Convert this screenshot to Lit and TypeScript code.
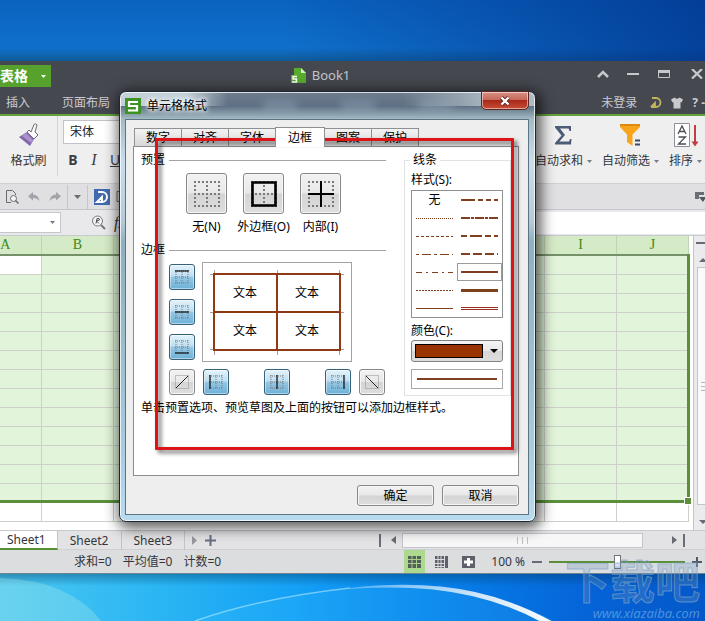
import { LitElement, html, svg, css } from "lit";
import { customElement, state } from "lit/decorators.js";
import { classMap } from "lit/directives/class-map.js";

const COLUMNS = ["A", "B", "C", "D", "E", "F", "G", "H", "I", "J"];
const ROWS = Array.from({ length: 14 }, (_, i) => i + 1);
const TABS = ["数字", "对齐", "字体", "边框", "图案", "保护"];

const BROWN = "#7f4020";

type LineStyle = { name: string; width: number; dash?: string; double?: boolean };

const LINE_STYLES: LineStyle[] = [
  { name: "无", width: 0 },
  { name: "粗双点划线", width: 2, dash: "14 3 5 3 5 3" },
  { name: "点线", width: 1, dash: "1 1" },
  { name: "斜点划线", width: 2, dash: "9 1 3 1" },
  { name: "虚线", width: 1, dash: "3 2" },
  { name: "粗点划线", width: 2, dash: "6 3 12 3" },
  { name: "点划线", width: 1, dash: "3 3 9 3" },
  { name: "粗虚线", width: 2, dash: "9 3" },
  { name: "双点划线", width: 1, dash: "6 4 2 4" },
  { name: "中实线", width: 2 },
  { name: "细虚线", width: 1, dash: "2 1" },
  { name: "粗实线", width: 3 },
  { name: "细实线", width: 1 },
  { name: "双线", width: 1, double: true },
];

// Dotted 2x2 cell glyph used by both the preset and the edge buttons.
const dottedCell = (size: number, step: number, extra: unknown) => {
  const m = size / 2;
  const e = size - 1;
  return html`<svg width=${size} height=${size} viewBox="0 0 ${size} ${size}" aria-hidden="true">
    <path
      d="M0 1H${size}M0 ${m}H${size}M0 ${e}H${size}M1 0V${size}M${m} 0V${size}M${e} 0V${size}"
      fill="none"
      stroke="#77797c"
      stroke-width=${step > 2 ? 2 : 1}
      stroke-dasharray=${step > 2 ? "2 2" : "1 1"}
    />
    ${extra}
  </svg>`;
};

const edge = (d: string) => svg`<path d=${d} stroke="#111" stroke-width="1.2" fill="none" />`;

@customElement("app-root")
export class AppRoot extends LitElement {
  @state() private tab = "边框";
  @state() private line = "中实线";

  static styles = css`
    :host {
      display: block;
      font-family: "Noto Sans", "Noto Sans CJK SC", sans-serif;
      font-size: 12px;
      line-height: 16px;
      color: #33363c;
    }
    * { box-sizing: border-box; }
    button, input, select { font: inherit; color: inherit; margin: 0; }
    button { padding: 0; border: 0; background: none; display: inline-flex; align-items: center; justify-content: center; white-space: nowrap; }
    svg { display: block; flex: none; }
    .desktop {
      position: relative;
      display: flex;
      flex-direction: column;
      min-height: 100vh;
      padding-top: 61px;
      overflow: hidden;
      background:
        linear-gradient(90deg, rgba(0,50,140,0) 40%, rgba(0,50,140,.75) 100%) top / 100% 61px no-repeat,
        linear-gradient(180deg, #0a63bf 0, #0f70cb 48px, #105a96 61px, transparent 61px),
        linear-gradient(90deg, #4cc8f2 0, #2bb6f3 22%, #14a0f6 42%, #0680ea 62%, #0562d6 85%, #0458c8 100%);
    }
    .aurora { flex: 1; width: 100%; height: 48px; min-height: 48px; }

    .titlebar { display: flex; align-items: flex-start; height: 30px; background: #464850; color: #c3c5cc; position: relative; }
    .brand { display: flex; align-items: center; gap: 13px; height: 22px; margin-top: 4px; padding: 0 5px 0 0; background: #56a22c; color: #fff; font-size: 14px; font-weight: 700; }
    .book { flex: 1; display: flex; justify-content: center; align-items: center; gap: 6px; height: 28px; padding-right: 6px; font-size: 13px; }
    .wm { display: flex; align-items: center; gap: 16px; height: 26px; margin-right: 0; }
    .menubar { display: flex; align-items: center; height: 25px; padding-left: 6px; gap: 32px; background: #464850; border-bottom: 2px solid #62a33c; color: #c9cbd0; overflow: hidden; }
    .menubar button { font-size: 12px; }
    .account { margin-left: auto; display: flex; align-items: center; gap: 9px; }

    .ribbon { display: flex; height: 68px; background: #efefef; border-bottom: 1px solid #cfd0d3; overflow: hidden; }
    .tool { display: flex; flex-direction: column; align-items: center; justify-content: flex-start; gap: 6px; padding-top: 7px; }
    .tool .cap { display: flex; align-items: center; gap: 4px; }
    .brush { width: 58px; border-right: 1px solid #d4d4d6; height: 60px; }
    .fonts { padding: 4px 0 0 5px; display: flex; flex-direction: column; gap: 8px; width: 160px; }
    .fontname { height: 24px; border: 1px solid #c2c3c8; border-radius: 0; background: #fff; appearance: none; padding: 0 6px; color: #222; }
    .biu { display: flex; gap: 11px; padding-left: 5px; font-size: 14px; align-items: center; }
    .biu button { width: 10px; color: #3c3e44; }
    .bold { font-weight: 700; }
    .ital { font-family: "Liberation Serif", serif; font-style: italic; font-size: 16px; }
    .under { text-decoration: underline; }
    .data { margin-left: auto; display: flex; gap: 10px; padding-right: 3px; }

    .quick { display: flex; align-items: center; height: 26px; background: #e0e0e2; border-bottom: 1px solid #c4c6cc; gap: 6px; padding-left: 5px; }
    .history { display: flex; align-items: center; gap: 9px; }
    .quick .sep { width: 1px; height: 24px; background: #c5c6ca; }
    .quick .end { margin-left: auto; }
    .quick .blue { background: #4169b0; width: 16px; height: 16px; }
    .formula { display: flex; align-items: center; height: 26px; background: #e9e9ec; border-bottom: 1px solid #c9cacf; }
    .namebox { display: flex; align-items: center; width: 61px; height: 21px; margin-right: 30px; border: 1px solid #c6c7cc; border-left: 0; background: #fff; }
    .namebox input { width: 50px; border: 0; background: none; outline: 0; }
    .formula .ital { padding: 0 8px; }
    .fx { flex: 1; height: 22px; border: 0; background: #fff; border-radius: 0; outline: 0; }

    .sheetarea { display: flex; background: #fff; overflow: hidden; height: 294px; }
    .cells { flex: 1; position: relative; overflow: hidden; }
    table { border-collapse: collapse; table-layout: fixed; width: 720px; margin-left: -31px; }
    th { height: 19px; padding: 0; font: 14px/16px "Liberation Serif", serif; color: #3c8820; background: #d5eac6; border-right: 1px solid #bfd4b5; border-bottom: 2px solid #75916a; }
    td { height: 19px; padding: 0; border: 1px solid #cdd1ca; border-top: 0; background: #e2f4d9; }
    td.plain { background: #fff; }
    .range { position: absolute; left: -31px; top: 18px; width: 721px; height: 249px; border: solid #5b8f3c; border-width: 0 3px 3px 0; pointer-events: none; }
    .handle { position: absolute; right: -4px; bottom: -4px; width: 6px; height: 6px; background: #5b8f3c; outline: 1px solid #fff; }
    .vscroll { width: 12px; background: #ebebed; border-left: 1px solid #c3c4c8; display: flex; flex-direction: column; align-items: flex-end; padding: 6px 0; gap: 7px; }
    .vthumb { flex: 1; width: 8px; margin-top: -4px; background: #fafafa; border: 1px solid #c4c5ca; border-right: 0; display: flex; align-items: center; }
    .vscroll .down { margin-top: 8px; }

    .tabsbar { display: flex; height: 20px; background: #e3e3e5; border-top: 1px solid #c8c9cc; border-bottom: 1px solid #cfd0d3; }
    .tabsbar .sheet { padding: 0 12px; border-right: 1px solid #c2c3c8; height: 19px; }
    .tabsbar .sheet.on { background: #fff; border-bottom: 2px solid #549030; padding: 0 11px 0 7px; }
    .addsheet { display: flex; align-items: center; gap: 8px; padding-left: 7px; }
    .hscroll { margin-left: auto; display: flex; align-items: center; gap: 6px; padding-right: 20px; }
    .hbar { width: 241px; height: 15px; border: 1px solid #c4c5ca; background: #f7f7f8; display: flex; align-items: center; justify-content: center; }
    .hscroll .right { margin-left: 23px; }
    .mark { width: 2px; height: 13px; background: #6a6c78; }

    .status { display: flex; align-items: center; height: 24px; background: #dcdddf; border-bottom: 1px solid #6d8590; padding-left: 74px; gap: 11px; }
    .views { margin-left: auto; display: flex; align-items: center; gap: 6px; padding-right: 1px; }
    .views button { width: 21px; height: 23px; }
    .views .on { background: #add98f; }
    .zoom { display: flex; align-items: center; gap: 7px; padding-right: 3px; }
    .zoom span { font-size: 12px; }
    .slider { appearance: none; width: 136px; height: 16px; background: linear-gradient(#5b8f3c, #5b8f3c) center / 100% 2px no-repeat; }
    .slider::-webkit-slider-thumb { appearance: none; width: 7px; height: 14px; background: #fff; border: 1px solid #6f7278; border-radius: 0; }

    .dialog {
      position: absolute;
      left: 119px;
      top: 91px;
      width: 417px;
      padding: 0 6px 6px 5px;
      border: 1px solid #1d2833;
      border-radius: 7px;
      background:
        linear-gradient(90deg, #c3d0d8 0, #c3d0d8 16%, rgba(195,208,216,0) 26%, rgba(195,208,216,0) 68%, #aebbc4 90%) top / 100% 14px no-repeat,
        linear-gradient(180deg, #6f7d8d 0, #5e7084 14px, #a3bcc4 27px, #c9deed 70px, #b4cad9 130px, #8eb0c0 150px, #a5cbdc 350px, #b9dbf0 100%);
      box-shadow: inset 0 0 0 1px rgba(255,255,255,.75), 2px 3px 14px 3px rgba(0,0,0,.65);
      color: #000;
    }
    .dtitle { display: flex; align-items: center; gap: 6px; height: 27px; }
    .dtitle .name { text-shadow: 0 0 7px #fff, 0 0 5px #fff, 0 0 4px #fff; }
    .blurred { flex: 1; display: flex; gap: 44px; padding-left: 50px; filter: blur(4px); }
    .blurred i { height: 10px; width: 34px; background: #95a7bb; opacity: .5; }
    .close { align-self: flex-start; width: 48px; height: 19px; margin: -1px 0 0; border: 1px solid #5c2824; border-radius: 0 0 5px 5px; background: linear-gradient(#d98f83 0, #c66a5b 45%, #a8291a 50%, #c94c37 100%); box-shadow: inset 0 0 0 1px rgba(255,255,255,.5); }
    .client { background: #eee; border: 1px solid #5f7482; padding: 6px 9px 8px 7px; }
    .dtabs { display: flex; align-items: flex-end; height: 20px; padding-left: 1px; }
    .dtabs button { width: 48px; height: 18px; margin-right: -1px; flex: 0 1 auto; border: 1px solid #8e9093; border-bottom: 0; background: linear-gradient(#f3f3f3, #d8d8d8); }
    .dtabs button.on { width: 50px; height: 20px; background: #fff; margin-bottom: -1px; z-index: 1; }
    .panel { display: flex; justify-content: space-between; gap: 18px; background: #fff; border: 1px solid #8a8c90; padding: 5px 7px 0 7px; }
    .left { flex: 1; min-width: 0; }
    .head { display: flex; align-items: center; gap: 4px; height: 16px; }
    .head::after { content: ""; flex: 1; height: 1px; background: #a3a3a5; }
    .presets { display: grid; grid-template-columns: 57px 57px 57px; padding: 5px 0 7px 37px; }
    .presets label { display: flex; flex-direction: column; align-items: center; gap: 5px; white-space: nowrap; }
    .face { border: 1px solid #85878a; border-radius: 3px; background: linear-gradient(#f2f2f2 0, #e8e8e8 48%, #d4d4d4 52%, #dedede 100%); box-shadow: inset 0 0 0 1px #f6f6f6; }
    .presets .face { width: 41px; height: 41px; }
    .editor { display: grid; grid-template-columns: 26px 150px; column-gap: 7px; row-gap: 7px; padding: 4px 0 0 28px; }
    .side { display: flex; flex-direction: column; gap: 9px; padding-top: 2px; }
    .sq { width: 26px; height: 26px; }
    .blueface { border-color: #376079; background: linear-gradient(#e4f3fb 0, #bfdff1 45%, #94c6e3 52%, #6eb1d8 100%); box-shadow: inset 0 0 0 1px rgba(255,255,255,.45); }
    .preview { border: 1px solid #a3a3a5; height: 100px; position: relative; display: grid; grid-template: 38px 38px / 62px 62px; padding: 11px; place-items: center; }
    .preview svg { position: absolute; left: 0; top: 0; }
    .bottom { grid-column: 1 / -1; display: flex; gap: 8px; width: 216px; }
    .bottom .mid { flex: 1; display: flex; justify-content: space-between; }
    .hint { margin: 5px 0 59px; white-space: nowrap; width: 245px; }
    fieldset { margin: 0; width: 107px; align-self: flex-start; min-width: 0; padding: 4px 6px 6px; border: 1px solid #e2e2e4; }
    legend { padding: 0 3px; margin-left: -1px; }
    .lines { display: grid; grid-template-columns: 1fr 1fr; grid-auto-rows: 18px; border: 1px solid #8d8f93; margin: 2px 0 5px; width: 92px; }
    .lines button { border: 1px solid transparent; }
    .lines button.on { border-color: #9a9ca0; }
    .cap2 { display: block; }
    .combo { position: relative; width: 92px; height: 22px; margin: 1px 0 7px; }
    .combo select { appearance: none; width: 100%; height: 22px; border: 1px solid #7f8285; border-radius: 3px; background: linear-gradient(#f4f4f4 0, #e9e9e9 50%, #d6d6d6 52%, #dedede 100%); }
    .swatch { position: absolute; left: 4px; top: 4px; right: 20px; bottom: 4px; background: #993300; border: 1px solid #000; pointer-events: none; }
    .combo svg { position: absolute; right: 5px; top: 9px; pointer-events: none; }
    .sample { width: 92px; height: 20px; border: 1px solid #a6a8ab; display: flex; align-items: center; justify-content: center; }
    .actions { display: flex; justify-content: flex-end; gap: 8px; padding-top: 9px; }
    .actions button { width: 77px; height: 21px; }

    .callout { position: absolute; left: 155px; top: 138px; width: 359px; height: 312px; border: 3px solid #dc1418; border-radius: 1px; pointer-events: none; filter: drop-shadow(3px 3px 2px rgba(0,0,0,.6)); }
    .watermark { position: absolute; right: 5px; bottom: 2px; text-align: right; pointer-events: none; color: rgba(110,150,190,.3); }
    .watermark b { display: block; font-size: 45px; line-height: 48px; font-weight: 700; -webkit-text-stroke: 1px rgba(130,165,200,.65); }
    .watermark i { display: block; font-size: 13px; line-height: 14px; color: rgba(100,165,225,.75); }
  `;

  private lineGlyph(s: LineStyle) {
    if (!s.width) return html`无`;
    const y = s.width % 2 ? 3.5 : 3;
    return html`<svg width="37" height="7" viewBox="0 0 37 7" aria-hidden="true">
      ${s.double
        ? svg`<path d="M0 2.5H37M0 4.5H37" stroke="#993020" />`
        : svg`<path d="M0 ${y}H37" stroke=${BROWN} stroke-width=${s.width} stroke-dasharray=${s.dash ?? "none"} />`}
    </svg>`;
  }

  private caret(color = "#777a80") {
    return html`<svg width="5" height="3" viewBox="0 0 5 3" aria-hidden="true"><path d="M0 0H5L2.5 3Z" fill=${color} /></svg>`;
  }

  private edgeButton(name: string, d: string, blue = true) {
    return html`<button class=${classMap({ face: true, sq: true, blueface: blue })} aria-label=${name}>
      ${blue
        ? dottedCell(14, 1, edge(d))
        : html`<svg width="14" height="14" viewBox="0 0 14 14" aria-hidden="true"><path d="M.5 .5H13.5V13.5H.5Z" fill="none" stroke="#8c8e90" stroke-dasharray="1 1" /><path d=${d} stroke="#222" /></svg>`}
    </button>`;
  }

  private renderTop() {
    return html`
      <header class="titlebar">
        <button class="brand">表格 ${this.caret("#fff")}</button>
        <div class="book">
          <svg width="15" height="15" viewBox="0 0 15 15" aria-hidden="true"><path d="M3 0H10L15 5V15H3Z" fill="#58ac2b" /><path d="M10 0V5H15Z" fill="#d7efc7" /><path d="M0 7H7V15H0Z" fill="#58ac2b" /><path d="M6 8.500H2V11H5.500V14H1" fill="none" stroke="#fff" stroke-width="1.500" /></svg>
          <span>Book1</span>
        </div>
        <div class="wm">
          <button aria-label="折叠"><svg width="14" height="10" viewBox="0 0 14 10"><path d="M2 8L7 3L12 8" fill="none" stroke="#c7c8ce" stroke-width="2.500" /></svg></button>
          <button aria-label="最小化"><svg width="14" height="10" viewBox="0 0 14 10"><path d="M1 5H13" stroke="#c7c8ce" stroke-width="2" /></svg></button>
          <button aria-label="最大化"><svg width="16" height="10" viewBox="0 0 16 10"><path d="M2.500 1.500H13.500V8.500H2.500Z" fill="none" stroke="#c7c8ce" /><path d="M2 2.500H14" stroke="#c7c8ce" stroke-width="3" /></svg></button>
          <button aria-label="关闭"><svg width="17" height="10" viewBox="0 0 17 10"><path d="M4 0L14 9.500M14 0L4 9.500" stroke="#c7c8ce" stroke-width="2.300" /></svg></button>
        </div>
      </header>
      <nav class="menubar">
        <button>插入</button>
        <button>页面布局</button>
        <div class="account">
          <button>未登录</button>
          <svg width="16" height="13" viewBox="0 0 16 13" aria-hidden="true"><path d="M4 2H8A4 4 0 0 1 8 11H3M3 11L7 7V11" fill="none" stroke="#c3b45c" stroke-width="1.800" transform="translate(2 0)" /></svg>
          <svg width="12" height="12" viewBox="0 0 12 12" aria-hidden="true"><path d="M3.500 0.500Q6 3 8.500 0.500L12 2.500L10.500 5.500L9.500 5V11.500H2.500V5L1.500 5.500L0 2.500Z" fill="#c9cad0" /></svg>
          <button class="bold" aria-label="帮助">? -</button>
        </div>
      </nav>
      <section class="ribbon">
        <button class="tool brush">
          <svg width="24" height="24" viewBox="0 0 24 24" aria-hidden="true"><path d="M14 9L17 1.500Q19 0 20 2L18 9L21 12L17 16L10 9L12 7Z" fill="#fafafa" stroke="#6c6c76" /><path d="M10 9L17 16L13 23L2 14Z" fill="#8366ad" /><path d="M9 10L16 17L14 20L5 13Z" fill="#aa93cb" /></svg>
          <span class="cap">格式刷</span>
        </button>
        <div class="fonts">
          <select class="fontname" aria-label="字体"><option>宋体</option></select>
          <div class="biu"><button class="bold">B</button><button class="ital">I</button><button class="under">U</button></div>
        </div>
        <div class="data">
          <button class="tool">
            <svg width="24" height="24" viewBox="0 0 24 24" aria-hidden="true"><path d="M4 3H20V8H18.500L17.500 5.500H9L14 12L8.500 18.500H18L19 16H20.500L20 21.500H4V20L10.500 12.500L4 4.500Z" fill="#4d5d78" /></svg>
            <span class="cap">自动求和 ${this.caret()}</span>
          </button>
          <button class="tool">
            <svg width="24" height="24" viewBox="0 0 24 24" aria-hidden="true"><path d="M2 1H22V4L14.500 11.500V23L9 19V11.500L2 4Z" fill="#f8a51b" /><path d="M2 1H22V3H2Z" fill="#dc8a10" /><path d="M17 17.500H22M17 21.500H22" stroke="#3b4a66" stroke-width="2" /></svg>
            <span class="cap">自动筛选 ${this.caret()}</span>
          </button>
          <button class="tool">
            <svg width="26" height="24" viewBox="0 0 26 24" aria-hidden="true"><path d="M2.500 .5H17.500V23.500H2.500Z" fill="#fff" stroke="#8e9096" /><path d="M6 11L10 3L14 11M7.500 8.500H12.500M6.500 14H13.500L6.500 21H14" fill="none" stroke="#4a4d55" stroke-width="1.300" /><path d="M23 2V20" stroke="#c33c40" stroke-width="2" /><path d="M19.500 18.500H26.500L23 23.500Z" fill="#c33c40" /></svg>
            <span class="cap">排序 ${this.caret()}</span>
          </button>
        </div>
      </section>
      <div class="quick">
        <div class="history">
          <button aria-label="打印预览"><svg width="14" height="14" viewBox="0 0 14 14"><path d="M1.500 .5H7.500L10.500 3.500V5M6 12.500H1.500V.5" fill="none" stroke="#696b72" /><circle cx="8.500" cy="8.500" r="3" fill="#f4f4f4" stroke="#696b72" /><path d="M10.500 10.500L13.500 13.500" stroke="#696b72" stroke-width="1.500" /></svg></button>
          <button aria-label="撤销"><svg width="12" height="10" viewBox="0 0 12 10"><path d="M5 0V2.500Q10.500 2.500 11.500 9Q9 6 5 6V8.500L0 4.200Z" fill="#a2a4aa" /></svg></button>
          <button aria-label="恢复"><svg width="12" height="10" viewBox="0 0 12 10"><path d="M7 0V2.500Q1.500 2.500 .5 9Q3 6 7 6V8.500L12 4.200Z" fill="#a2a4aa" /></svg></button>
        </div>
        <span class="sep"></span>
        <button aria-label="更多"><svg width="7" height="4" viewBox="0 0 7 4"><path d="M0 0H7L3.500 4Z" fill="#6a6c72" /></svg></button>
        <span class="sep"></span>
        <button class="blue" aria-label="文档"><svg width="16" height="16" viewBox="0 0 16 16"><path d="M4 3H8A5 5 0 0 1 8 13H3L8 8V12" fill="none" stroke="#fff" stroke-width="2" /></svg></button>
        <svg width="10" height="11" viewBox="0 0 10 11" aria-hidden="true"><path d="M9 .5H1V10.500H9" fill="none" stroke="#696b72" /></svg>
        <button class="end" aria-label="窗格"><svg width="11" height="12" viewBox="0 0 11 12"><path d="M1 1H10V4H5V8H1Z" fill="#6c6e77" /><path d="M5 6H11V8L9 11Z" fill="#54565f" /></svg></button>
      </div>
      <div class="formula">
        <div class="namebox"><input aria-label="名称框" />${this.caret()}</div>
        <svg width="15" height="15" viewBox="0 0 15 15" aria-hidden="true"><circle cx="6.500" cy="6" r="5" fill="#f5f5f5" stroke="#75777e" /><path d="M5 8.500L6 3.500H8L8.500 5L5.500 6L8 8.500" fill="none" stroke="#4c4e55" /><path d="M10 10L14 14" stroke="#75777e" stroke-width="2" /></svg>
        <button class="ital">fx</button>
        <input class="fx" aria-label="编辑栏" />
      </div>`;
  }

  private renderGrid() {
    return html`
      <main class="sheetarea">
        <div class="cells">
          <table>
            <thead><tr>${COLUMNS.map((c) => html`<th scope="col">${c}</th>`)}</tr></thead>
            <tbody>
              ${ROWS.map((r) => html`<tr>${COLUMNS.map((_, c) => html`<td class=${classMap({ plain: r > 13 || (r === 1 && c === 0) })}></td>`)}</tr>`)}
            </tbody>
          </table>
          <div class="range"><span class="handle"></span></div>
        </div>
        <div class="vscroll">
          <svg width="9" height="2" viewBox="0 0 9 2" aria-hidden="true"><path d="M0 0H9V2H0Z" fill="#686b76" /></svg>
          <svg width="6" height="13" viewBox="0 0 6 13" aria-hidden="true"><path d="M0 11L4 7L8 11Z" fill="#686b76" /></svg>
          <div class="vthumb"><svg width="7" height="9" viewBox="0 0 7 9" aria-hidden="true"><path d="M3 .5H7M3 4.500H7M3 8.500H7" stroke="#b6b8bd" /></svg></div>
          <svg class="down" width="6" height="4" viewBox="0 0 6 4" aria-hidden="true"><path d="M0 0L4 4L8 0Z" fill="#686b76" /></svg>
        </div>
      </main>
      <div class="tabsbar">
        <button class="sheet on">Sheet1</button>
        <button class="sheet">Sheet2</button>
        <button class="sheet">Sheet3</button>
        <div class="addsheet">
          <svg width="5" height="9" viewBox="0 0 5 9" aria-hidden="true"><path d="M0 0L5 4.500L0 9Z" fill="#95979c" /></svg>
          <button aria-label="新建工作表"><svg width="11" height="11" viewBox="0 0 11 11"><path d="M5.500 0V11M0 5.500H11" stroke="#6a6c80" stroke-width="2" /></svg></button>
        </div>
        <div class="hscroll">
          <span class="mark"></span>
          <svg width="9" height="8" viewBox="0 0 9 8" aria-hidden="true"><path d="M9 0L4 4L9 8Z" fill="#686b76" /></svg>
          <div class="hbar"><svg width="11" height="7" viewBox="0 0 11 7" aria-hidden="true"><path d="M.5 0V7M5.500 0V7M10.500 0V7" stroke="#c0c2c6" /></svg></div>
          <svg class="right" width="5" height="8" viewBox="0 0 5 8" aria-hidden="true"><path d="M0 0L5 4L0 8Z" fill="#686b76" /></svg>
          <span class="mark"></span>
        </div>
      </div>
      <footer class="status">
        <span>求和=0</span><span>平均值=0</span><span>计数=0</span>
        <div class="views">
          <button class="on" aria-label="普通视图"><svg width="13" height="12" viewBox="0 0 13 12"><path d="M0 0H13V12H0Z" fill="#54615a" /><path d="M0 3.500H13M0 7.500H13M4 0V12M8.500 0V12" stroke="#a6cf8c" /></svg></button>
          <button aria-label="分页预览"><svg width="13" height="12" viewBox="0 0 13 12"><path d="M0 0H13V12H0Z" fill="#5d5f6a" /><path d="M0 3.500H9M0 7.500H9M3 0V12M6 0V12M9.500 0V12M0 10.500H9" stroke="#dcdddf" /></svg></button>
          <button aria-label="页面视图"><svg width="13" height="12" viewBox="0 0 13 12"><path d="M0 0H13V12H0Z" fill="#5d5f6a" /><path d="M6.500 2V10M2 6H11" stroke="#fff" stroke-width="3" /></svg></button>
        </div>
        <div class="zoom">
          <span>100 %</span>
          <button aria-label="缩小"><svg width="10" height="10" viewBox="0 0 10 10"><path d="M0 5H10" stroke="#686a76" stroke-width="2" /></svg></button>
          <input class="slider" type="range" aria-label="显示比例" min="0" max="100" value="50" />
          <button aria-label="放大"><svg width="10" height="10" viewBox="0 0 10 10"><path d="M5 0V10M0 5H10" stroke="#555762" stroke-width="2" /></svg></button>
        </div>
      </footer>`;
  }

  private renderDialog() {
    return html`
      <section class="dialog" role="dialog" aria-label="单元格格式">
        <div class="dtitle">
          <svg width="16" height="16" viewBox="0 0 16 16" aria-hidden="true"><path d="M0 0H16V16H0Z" fill="#3c9321" /><path d="M13 4H4V8H12V12.500H3" fill="none" stroke="#fff" stroke-width="2.200" /></svg>
          <span class="name">单元格格式</span>
          <div class="blurred"><i></i><i></i><i></i></div>
          <button class="close" aria-label="关闭"><svg width="12" height="10" viewBox="0 0 12 10"><path d="M2.500 1.500L9.500 8.500M9.500 1.500L2.500 8.500" stroke="#5a2420" stroke-width="4" /><path d="M2.500 1.500L9.500 8.500M9.500 1.500L2.500 8.500" stroke="#fff" stroke-width="2.400" /></svg></button>
        </div>
        <div class="client">
          <div class="dtabs" role="tablist">
            ${TABS.map((t) => html`<button role="tab" class=${classMap({ on: t === this.tab })} @click=${() => (this.tab = t)}>${t}</button>`)}
          </div>
          <div class="panel">
            <div class="left">
              <div class="head">预置</div>
              <div class="presets">
                <label><button class="face">${dottedCell(26, 4, "")}</button>无(N)</label>
                <label><button class="face">${dottedCell(26, 4, svg`<path d="M1.500 1.500H24.500V24.500H1.500Z" fill="none" stroke="#000" stroke-width="2.600" />`)}</button>外边框(O)</label>
                <label><button class="face">${dottedCell(26, 4, svg`<path d="M13 0V26M0 13H26" stroke="#000" stroke-width="2" />`)}</button>内部(I)</label>
              </div>
              <div class="head">边框</div>
              <div class="editor">
                <div class="side">
                  ${this.edgeButton("上边框", "M0 1H14")}
                  ${this.edgeButton("中横线", "M0 7H14")}
                  ${this.edgeButton("下边框", "M0 13H14")}
                </div>
                <div class="preview">
                  <svg width="148" height="98" viewBox="0 0 148 98" aria-hidden="true">
                    <path d="M11.500 7V92M74.500 7V92M136.500 7V92M7 11.500H141M7 49.500H141M7 86.500H141" stroke="#b39c92" />
                    <path d="M11 11H137V87H11ZM74 11V87M11 49H137" fill="none" stroke="#8f3a14" stroke-width="2" />
                  </svg>
                  <span>文本</span><span>文本</span><span>文本</span><span>文本</span>
                </div>
                <div class="bottom">
                  ${this.edgeButton("左斜线", "M1 13L13 1", false)}
                  <div class="mid">
                    ${this.edgeButton("左边框", "M1 0V14")}
                    ${this.edgeButton("中竖线", "M7 0V14")}
                    ${this.edgeButton("右边框", "M13 0V14")}
                  </div>
                  ${this.edgeButton("右斜线", "M1 1L13 13", false)}
                </div>
              </div>
              <p class="hint">单击预置选项、预览草图及上面的按钮可以添加边框样式。</p>
            </div>
            <fieldset>
              <legend>线条</legend>
              <span class="cap2">样式(S):</span>
              <div class="lines">
                ${LINE_STYLES.map((s) => html`<button aria-label=${s.name} class=${classMap({ on: s.name === this.line })} @click=${() => (this.line = s.name)}>${this.lineGlyph(s)}</button>`)}
              </div>
              <label class="cap2" for="colour">颜色(C):</label>
              <div class="combo">
                <select id="colour"><option value="#993300" aria-label="棕色"></option></select>
                <span class="swatch"></span>
                <svg width="8" height="4" viewBox="0 0 8 4" aria-hidden="true"><path d="M0 0H8L4 4Z" fill="#000" /></svg>
              </div>
              <div class="sample"><svg width="80" height="2" viewBox="0 0 80 2" aria-hidden="true"><path d="M0 0H80V2H0Z" fill=${BROWN} /></svg></div>
            </fieldset>
          </div>
          <div class="actions"><button class="face">确定</button><button class="face">取消</button></div>
        </div>
      </section>`;
  }

  render() {
    return html`
      <div class="desktop">
        ${this.renderTop()} ${this.renderGrid()}
        <svg class="aurora" viewBox="0 0 705 48" preserveAspectRatio="none" aria-hidden="true">
          <defs>
            <linearGradient id="glow" x1="0" x2="1"><stop offset="0" stop-color="#fff" stop-opacity=".3" /><stop offset=".6" stop-color="#fff" stop-opacity=".8" /><stop offset="1" stop-color="#fff" /></linearGradient>
            <linearGradient id="shade" x1="0" x2="0" y1="0" y2="1"><stop offset="0" stop-color="#003a60" stop-opacity=".4" /><stop offset="1" stop-color="#003a60" stop-opacity="0" /></linearGradient>
          </defs>
          <path d="M0 0H705V12H0Z" fill="url(#shade)" />
          <path d="M0 4Q70 6 102 48H0Z" fill="#b8f2ea" fill-opacity=".28" />
          <path d="M195 48Q260 24 350 14L420 12Q500 18 556 48Z" fill="#3cc0ff" fill-opacity=".18" />
          <path d="M195 47Q260 24 350 14" fill="none" stroke="#bff0ff" stroke-opacity=".55" stroke-width="1.500" />
          <path d="M350 14Q420 6 475 18Q520 28 562 53L550 53Q515 32 472 22Q420 10 350 15Z" fill="url(#glow)" />
        </svg>
        ${this.renderDialog()}
        <div class="callout"></div>
        <div class="watermark"><b>下载吧</b><i>www.xiazaiba.com</i></div>
      </div>`;
  }
}
